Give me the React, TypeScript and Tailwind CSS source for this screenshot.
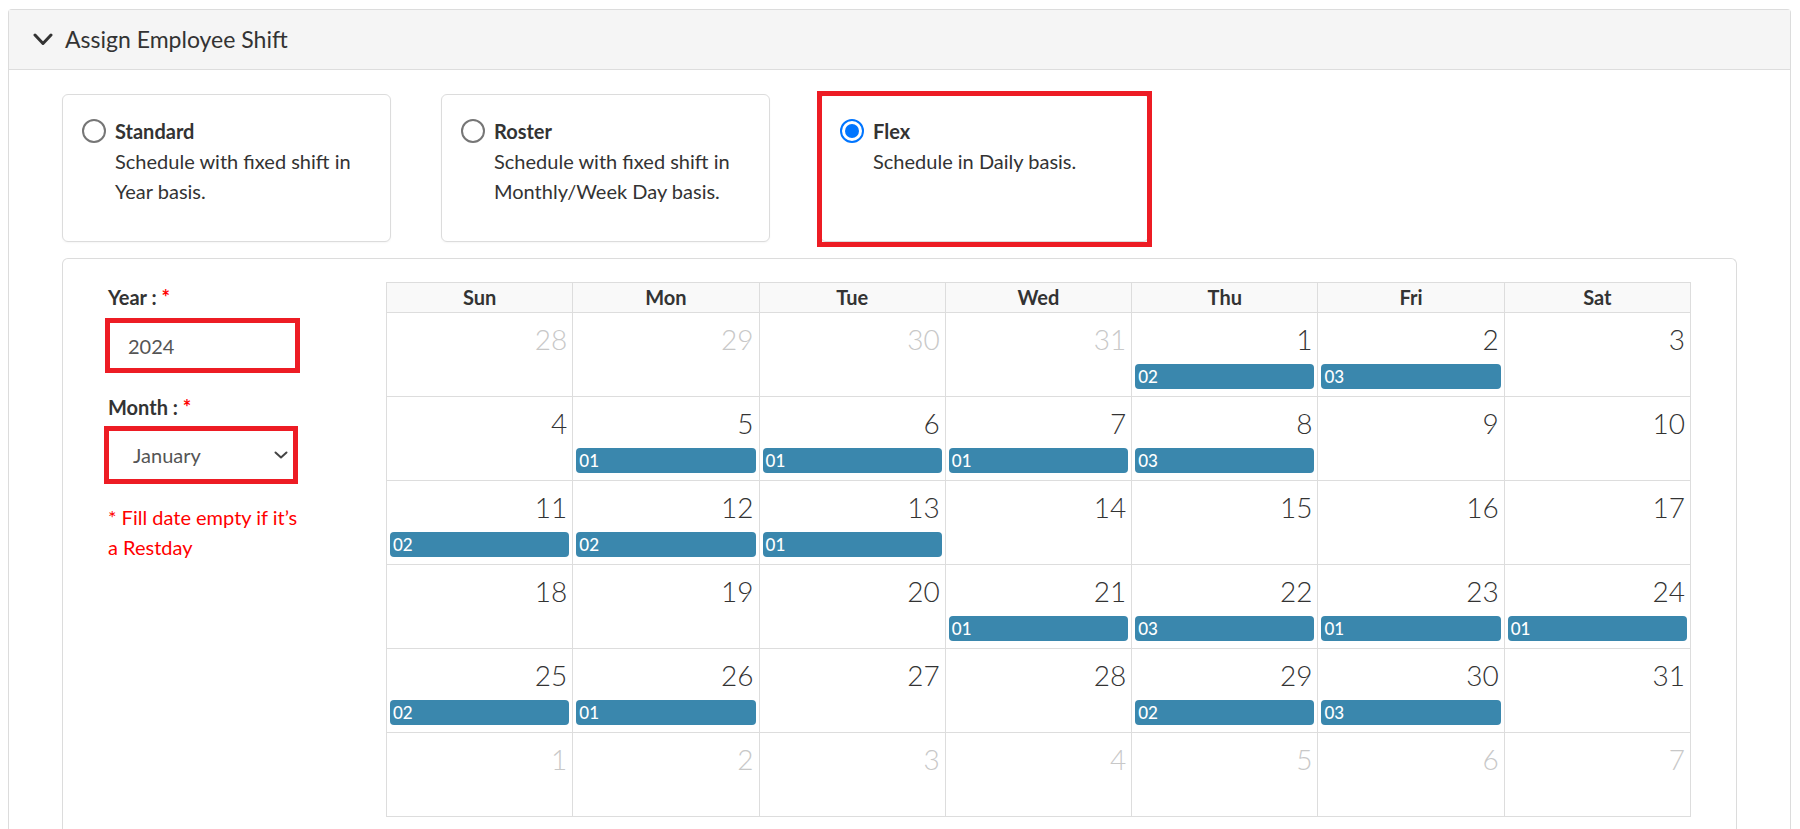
import React from "react";

type Cell = { day: number; other?: boolean; shift?: string };

const weeks: Cell[][] = [
  [
    { day: 28, other: true },
    { day: 29, other: true },
    { day: 30, other: true },
    { day: 31, other: true },
    { day: 1, shift: "02" },
    { day: 2, shift: "03" },
    { day: 3 },
  ],
  [
    { day: 4 },
    { day: 5, shift: "01" },
    { day: 6, shift: "01" },
    { day: 7, shift: "01" },
    { day: 8, shift: "03" },
    { day: 9 },
    { day: 10 },
  ],
  [
    { day: 11, shift: "02" },
    { day: 12, shift: "02" },
    { day: 13, shift: "01" },
    { day: 14 },
    { day: 15 },
    { day: 16 },
    { day: 17 },
  ],
  [
    { day: 18 },
    { day: 19 },
    { day: 20 },
    { day: 21, shift: "01" },
    { day: 22, shift: "03" },
    { day: 23, shift: "01" },
    { day: 24, shift: "01" },
  ],
  [
    { day: 25, shift: "02" },
    { day: 26, shift: "01" },
    { day: 27 },
    { day: 28 },
    { day: 29, shift: "02" },
    { day: 30, shift: "03" },
    { day: 31 },
  ],
  [
    { day: 1, other: true },
    { day: 2, other: true },
    { day: 3, other: true },
    { day: 4, other: true },
    { day: 5, other: true },
    { day: 6, other: true },
    { day: 7, other: true },
  ],
];

const dayNames = ["Sun", "Mon", "Tue", "Wed", "Thu", "Fri", "Sat"];

function Radio({ checked }: { checked?: boolean }) {
  if (checked) {
    return (
      <span className="flex h-[24px] w-[24px] items-center justify-center rounded-full border-[2px] border-[#0075ff] bg-white">
        <span className="h-[14px] w-[14px] rounded-full bg-[#0075ff]" />
      </span>
    );
  }
  return <span className="h-[24px] w-[24px] rounded-full border-[2px] border-[#767676] bg-white" />;
}

function ShiftType({
  title,
  lines,
  checked,
}: {
  title: string;
  lines: string[];
  checked?: boolean;
}) {
  return (
    <div className="relative h-[148px] w-[329px] rounded-[6px] border border-[#dcdcdc] bg-white pl-[19px] pt-[21px] shadow-[0_1px_2px_rgba(0,0,0,0.04)]">
      <div className="flex gap-[9px]">
        <div className="flex h-[30px] items-center">
          <Radio checked={checked} />
        </div>
        <div className="text-[20px] leading-[30px]">
          <div className="font-bold">{title}</div>
          {lines.map((l) => (
            <div key={l}>{l}</div>
          ))}
        </div>
      </div>
      {checked && (
        <div className="absolute -bottom-[6px] -left-[4px] -right-[4px] -top-[4px] border-[5px] border-[#ed1c24]" />
      )}
    </div>
  );
}

function DayCell({ cell }: { cell: Cell }) {
  return (
    <div className="h-[84px] border-b border-r border-[#dddddd]">
      <div
        className={`pr-[5px] pt-[8px] text-right text-[28px] font-light leading-[36px] ${
          cell.other ? "text-[#c8c8c8]" : "text-[#333]"
        }`}
      >
        {cell.day}
      </div>
      {cell.shift && (
        <div className="mx-[3px] mt-[7px] h-[25px] rounded-[4px] bg-[#3a87ad] pl-[3px] text-[17px] font-medium leading-[25px] text-white">
          {cell.shift}
        </div>
      )}
    </div>
  );
}

export default function App() {
  return (
    <div className="min-h-screen bg-white pl-[8px] pr-[9px] pt-[9px] font-['Lato','Liberation_Sans',sans-serif] text-[#333]">
      <div className="rounded-t-[4px] border border-b-0 border-[#dcdcdc]">
        <div className="flex h-[60px] items-center gap-[12px] border-b border-[#dddddd] bg-[#f5f5f5] pl-[24px] text-[23px]">
          <svg width="20" height="13" viewBox="0 0 20 13" fill="none">
            <polyline points="2,2 10,10.5 18,2" stroke="#333" strokeWidth="3" strokeLinecap="round" strokeLinejoin="round" />
          </svg>
          <span>Assign Employee Shift</span>
        </div>

        <div className="px-[53px] pt-[24px]">
          <div className="flex gap-[50px]">
            <ShiftType title="Standard" lines={["Schedule with fixed shift in", "Year basis."]} />
            <ShiftType title="Roster" lines={["Schedule with fixed shift in", "Monthly/Week Day basis."]} />
            <ShiftType title="Flex" lines={["Schedule in Daily basis."]} checked />
          </div>

          <div className="mt-[16px] rounded-t-[6px] border border-b-0 border-[#dcdcdc] px-[45px] pb-[40px] pt-[23px]">
            <div className="flex">
              <div className="w-[278px] shrink-0 text-[20px] leading-[30px]">
                <div className="font-bold">
                  Year : <span className="text-[#ff0000]">*</span>
                </div>
                <div className="-ml-[3px] mt-[6px] flex h-[55px] w-[195px] items-center border-[5px] border-[#ed1c24] pl-[18px] text-[#555]">
                  2024
                </div>
                <div className="mt-[19px] font-bold">
                  Month : <span className="text-[#ff0000]">*</span>
                </div>
                <div className="-ml-[4px] mt-[4px] flex h-[58px] w-[194px] items-center justify-between border-[5px] border-[#ed1c24] pl-[24px] pr-[5px] text-[#555]">
                  <span>January</span>
                  <svg width="14" height="8" viewBox="0 0 14 8" fill="none">
                    <polyline points="1.5,1.5 7,6.5 12.5,1.5" stroke="#444" strokeWidth="2" strokeLinecap="round" strokeLinejoin="round" />
                  </svg>
                </div>
                <div className="mt-[18px] text-[#ff0000]">
                  <div className="whitespace-nowrap">* Fill date empty if it’s</div>
                  <div>a Restday</div>
                </div>
              </div>

              <div className="flex-1 border-l border-t border-[#dddddd]">
                <div className="grid grid-cols-7">
                  {dayNames.map((d) => (
                    <div
                      key={d}
                      className="h-[30px] border-b border-r border-[#dddddd] bg-[#f9f9f9] text-center text-[20px] font-bold leading-[29px]"
                    >
                      {d}
                    </div>
                  ))}
                  {weeks.flat().map((c, i) => (
                    <DayCell key={i} cell={c} />
                  ))}
                </div>
              </div>
            </div>
          </div>
        </div>
      </div>
    </div>
  );
}
